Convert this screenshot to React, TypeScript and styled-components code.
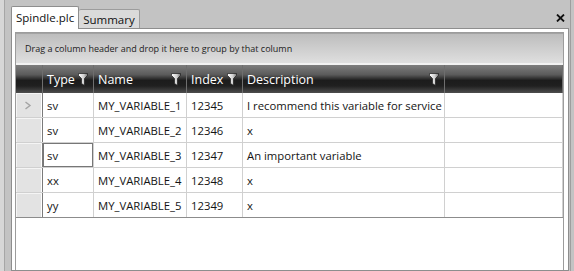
import React from "react";
import styled, { createGlobalStyle } from "styled-components";

const COLS = "27px 51px 93px 56px 202px 1fr";

interface RowData {
    id: number;
    type: string;
    name: string;
    index: string;
    description: string;
}

const rows: RowData[] = [
    { id: 1, type: "sv", name: "MY_VARIABLE_1", index: "12345", description: "I recommend this variable for service" },
    { id: 2, type: "sv", name: "MY_VARIABLE_2", index: "12346", description: "x" },
    { id: 3, type: "sv", name: "MY_VARIABLE_3", index: "12347", description: "An important variable" },
    { id: 4, type: "xx", name: "MY_VARIABLE_4", index: "12348", description: "x" },
    { id: 5, type: "yy", name: "MY_VARIABLE_5", index: "12349", description: "x" },
];

const columns = ["Type", "Name", "Index", "Description"];

const FilterIcon = () => (
    <svg width="10" height="13" viewBox="0 0 10 13">
        <defs>
            <linearGradient id="funnel" x1="0" x2="1" y1="0" y2="0">
                <stop offset="0" stopColor="#ffffff" />
                <stop offset="0.6" stopColor="#cfcfcf" />
                <stop offset="1" stopColor="#707070" />
            </linearGradient>
        </defs>
        <path
            d="M0.5 0.5 H9.5 V2.5 L6.5 5.5 V12.5 L3.5 10.5 V5.5 L0.5 2.5 Z"
            fill="url(#funnel)"
            stroke="#1c1c1c"
            strokeWidth="0.7"
        />
    </svg>
);

const Chevron = () => (
    <svg width="8" height="9" viewBox="0 0 8 9">
        <polyline points="1.5,1 6,4.5 1.5,8" fill="none" stroke="#a3a3a3" strokeWidth="1.4" />
    </svg>
);

const CloseIcon = () => (
    <svg width="9" height="8" viewBox="0 0 9 8">
        <path d="M1 0.5 L8 7.5 M8 0.5 L1 7.5" stroke="#111" strokeWidth="1.8" />
    </svg>
);

const App = () => {
    return (
        <Window>
            <GlobalStyle />
            <LeftEdge />
            <Dock>
                <TabStrip>
                    <Tab active>Spindle.plc</Tab>
                    <Tab>Summary</Tab>
                    <CloseButton>
                        <CloseIcon />
                    </CloseButton>
                </TabStrip>
                <Pane>
                    <GridBox>
                        <GroupPanel>Drag a column header and drop it here to group by that column</GroupPanel>
                        <HeaderRow>
                            <HeaderCell />
                            {columns.map((c) => (
                                <HeaderCell key={c}>
                                    <span>{c}</span>
                                    <FilterIcon />
                                </HeaderCell>
                            ))}
                            <HeaderCell />
                        </HeaderRow>
                        {rows.map((r, i) => (
                            <Row key={r.id} last={i === rows.length - 1}>
                                <Indicator>{i === 0 && <Chevron />}</Indicator>
                                <Cell focused={i === 2}>{r.type}</Cell>
                                <Cell>{r.name}</Cell>
                                <Cell>{r.index}</Cell>
                                <Cell>{r.description}</Cell>
                                <Cell />
                            </Row>
                        ))}
                    </GridBox>
                </Pane>
            </Dock>
            <RightEdge />
        </Window>
    );
};

export default App;

const GlobalStyle = createGlobalStyle`
    html, body {
        margin: 0;
        padding: 0;
    }
    body {
        background: #c3c3c3;
        font-family: "Open Sans", "Noto Sans", sans-serif;
    }
`;

const Window = styled.div`
    display: flex;
    width: 574px;
    height: 271px;
    overflow: hidden;
    background: #c3c3c3;
`;

const LeftEdge = styled.div`
    flex-shrink: 0;
    width: 4px;
    background: #d7d7d7;
    border-right: 1px solid #a6a6a6;
`;

const RightEdge = styled.div`
    flex: 1;
    margin-left: 1px;
    border-left: 1px solid #9e9e9e;
`;

const Dock = styled.div`
    display: flex;
    flex-direction: column;
    flex-shrink: 0;
    width: 558px;
    margin-left: 6px;
`;

const TabStrip = styled.div`
    display: flex;
    align-items: flex-end;
    height: 28px;
    flex-shrink: 0;
`;

const Tab = styled.div<{ active?: boolean }>`
    display: flex;
    align-items: center;
    box-sizing: border-box;
    height: ${(p) => (p.active ? "23px" : "19px")};
    margin-bottom: ${(p) => (p.active ? "-1px" : "0")};
    padding: ${(p) => (p.active ? "0 4px 1px 4px" : "0 4px 0 4px")};
    background: ${(p) => (p.active ? "#ffffff" : "#dadada")};
    border: 1px solid ${(p) => (p.active ? "#8e8e8e" : "#9c9c9c")};
    border-bottom: none;
    border-left-width: ${(p) => (p.active ? "1px" : "0")};
    border-radius: 2px 2px 0 0;
    position: relative;
    z-index: 1;
    font-size: 11.5px;
    color: #111;
    white-space: nowrap;
`;

const CloseButton = styled.div`
    display: flex;
    align-self: flex-start;
    margin: 14px 4px 0 auto;
`;

const Pane = styled.div`
    display: flex;
    flex-direction: column;
    flex: 1;
    background: #ffffff;
    border: 1px solid #8e8e8e;
    padding: 3px 4px 0 3px;
`;

const GridBox = styled.div`
    display: flex;
    flex-direction: column;
    flex: 1;
    border: 1px solid #9c9c9c;
    border-bottom: none;
`;

const GroupPanel = styled.div`
    display: flex;
    align-items: center;
    height: 29px;
    padding-left: 9px;
    border-top: 1px solid #a3a3a3;
    border-bottom: 2px solid #f2f2f2;
    background: linear-gradient(to bottom, #bdbdbd, #dfdfdf);
    font-size: 9px;
    color: #222;
    white-space: nowrap;
`;

const HeaderRow = styled.div`
    display: grid;
    grid-template-columns: ${COLS};
    height: 28px;
    background: linear-gradient(
        to bottom,
        #7e7e7e 0%,
        #5a5a5a 35%,
        #1c1c1c 55%,
        #202020 75%,
        #4e4e4e 100%
    );
`;

const HeaderCell = styled.div`
    display: flex;
    align-items: center;
    justify-content: space-between;
    box-sizing: border-box;
    padding: 0 5px 0 4px;
    border-right: 1px solid #6e6e6e;
    color: #ffffff;
    font-size: 12.5px;
    white-space: nowrap;
`;

const Row = styled.div<{ last?: boolean }>`
    display: grid;
    grid-template-columns: ${COLS};
    height: 25px;
    box-sizing: border-box;
    border-bottom: 1px solid ${(p) => (p.last ? "#8c8c8c" : "#d0d0d0")};
`;

const Indicator = styled.div`
    display: flex;
    align-items: center;
    justify-content: center;
    box-sizing: border-box;
    padding-right: 2px;
    background: #e3e3e3;
    border-right: 1px solid #7a7a7a;
    box-shadow: inset 1px 1px 0 #f5f5f5, inset -1px 0 0 #ffffff;
`;

const Cell = styled.div<{ focused?: boolean }>`
    display: flex;
    align-items: center;
    box-sizing: border-box;
    padding-left: 4px;
    border-right: 1px solid #d0d0d0;
    font-size: 11.3px;
    color: #141414;
    white-space: nowrap;
    overflow: hidden;
    box-shadow: ${(p) => (p.focused ? "inset 0 0 0 1px #777777" : "none")};
`;
